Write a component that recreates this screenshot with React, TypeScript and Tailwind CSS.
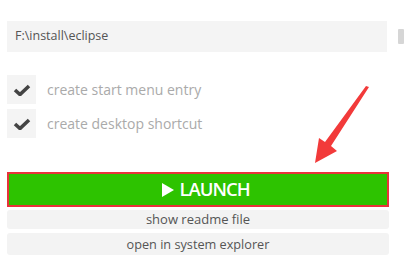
export default function App() {
    const options = ['create start menu entry', 'create desktop shortcut'];

    return (
        <main
            className="relative w-[404px] h-[255px] overflow-hidden bg-white pl-[7px] pt-[21px]"
            style={{ fontFamily: '"Open Sans", "Noto Sans", sans-serif' }}
        >
            {/* Install path */}
            <div className="flex items-center">
                <div className="w-[382px] h-[31px] bg-[#f4f4f4] flex items-center pl-[8px] text-[12.5px] text-[#555]">
                    F:\install\eclipse
                </div>
                <div className="ml-[11px] w-[6px] h-[15px] bg-[#d6d6d6] rounded-[1px]" />
            </div>

            {/* Options */}
            <div className="mt-[23px] flex flex-col gap-[5px]">
                {options.map((label) => (
                    <div key={label} className="flex items-center">
                        <div className="w-[29px] h-[29px] bg-[#f4f4f4] flex items-center justify-center">
                            <svg width="18" height="12" viewBox="0 0 18 12">
                                <path d="M2 6 L7 10.5 L16 2" fill="none" stroke="#444" strokeWidth="3.6" strokeLinejoin="miter" />
                            </svg>
                        </div>
                        <span className="ml-[11px] text-[14px] text-[#aaa]">{label}</span>
                    </div>
                ))}
            </div>

            {/* Actions */}
            <div className="mt-[34px] w-[382px] flex flex-col">
                <button className="h-[35px] border-2 border-[#e8333a] bg-[#2dc300] text-white flex items-center justify-center gap-[5px] pl-[16px] text-[18.5px] font-semibold tracking-[-1px] leading-none">
                    <svg width="12" height="14" viewBox="0 0 12 14">
                        <polygon points="0,0 12,7 0,14" fill="white" />
                    </svg>
                    <span>LAUNCH</span>
                </button>
                <button className="mt-[3px] h-[19px] rounded-[3px] bg-[#f3f3f3] text-[13px] text-[#555] leading-none">
                    show readme file
                </button>
                <button className="mt-[4px] h-[22px] rounded-[3px] bg-[#f3f3f3] text-[12.7px] text-[#555] leading-none">
                    open in system explorer
                </button>
            </div>

            {/* Annotation arrow */}
            <svg className="absolute left-0 top-0" width="404" height="255" viewBox="0 0 404 255">
                <polygon
                    points="369,87 331,146 337,151 315,163 319,138 325,142 366,86"
                    fill="#f23a3a"
                />
            </svg>
        </main>
    );
}
